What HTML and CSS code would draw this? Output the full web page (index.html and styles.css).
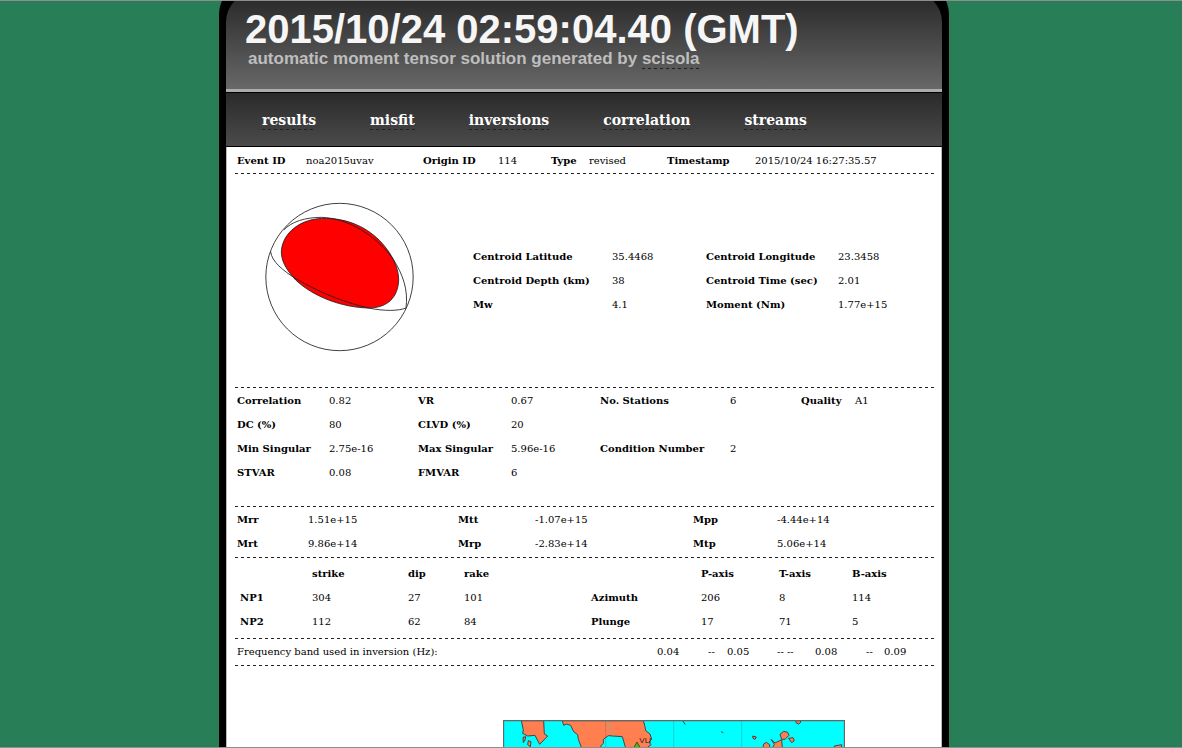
FILE: index.html
```html
<!DOCTYPE html>
<html lang="en">
<head>
<meta charset="utf-8">
<title>2015/10/24 02:59:04.40 (GMT)</title>
<link rel="stylesheet" href="styles.css">
</head>
<body>
<div class="frame">
  <header class="header">
    <h1 class="title">2015/10/24 02:59:04.40 (GMT)</h1>
    <p class="subtitle">automatic moment tensor solution generated by <a href="#scisola">scisola</a></p>
  </header>
  <nav class="nav">
    <a href="#results">results</a>
    <a href="#misfit">misfit</a>
    <a href="#inversions">inversions</a>
    <a href="#correlation">correlation</a>
    <a href="#streams">streams</a>
  </nav>
  <main class="content" id="results">
    <section class="block event">
      <table class="data">
        <colgroup><col class="w69"><col class="w117"><col class="w75"><col class="w53"><col class="w38"><col class="w78"><col class="w88"><col></colgroup>
        <tr><th>Event ID</th><td>noa2015uvav</td><th>Origin ID</th><td>114</td><th>Type</th><td>revised</td><th>Timestamp</th><td>2015/10/24 16:27:35.57</td></tr>
      </table>
    </section>
    <section class="block centroid">
      <svg class="beachball" viewBox="120 66 450 450" fill="none" stroke="#222" stroke-width="2.6" role="img" aria-label="Focal mechanism">
        <path fill="#f00" d="M305 115C380 117 440 150 480 200C508 235 521 270 521 300C519 350 490 384 430 384C350 382 265 350 212 300C180 265 169 240 169 215C172 160 225 113 305 115Z"/>
        <circle cx="343.5" cy="291" r="221"/>
        <path d="M176 150C200 125 240 112 290 112C370 115 450 165 503 235C535 285 550 330 543 385"/>
        <path d="M137 215C140 245 175 272 212 296C280 335 350 365 430 384C480 394 520 393 543 384"/>
      </svg>
      <table class="data">
        <colgroup><col class="w139"><col class="w94"><col class="w132"><col></colgroup>
        <tr><th>Centroid Latitude</th><td>35.4468</td><th>Centroid Longitude</th><td>23.3458</td></tr>
        <tr><th>Centroid Depth (km)</th><td>38</td><th>Centroid Time (sec)</th><td>2.01</td></tr>
        <tr><th>Mw</th><td>4.1</td><th>Moment (Nm)</th><td>1.77e+15</td></tr>
      </table>
    </section>
    <section class="block quality">
      <table class="data">
        <colgroup><col class="w92"><col class="w89"><col class="w93"><col class="w89"><col class="w130"><col class="w71"><col class="w54"><col></colgroup>
        <tr><th>Correlation</th><td>0.82</td><th>VR</th><td>0.67</td><th>No. Stations</th><td>6</td><th>Quality</th><td>A1</td></tr>
        <tr><th>DC (%)</th><td>80</td><th>CLVD (%)</th><td>20</td><td></td><td></td><td></td><td></td></tr>
        <tr><th>Min Singular</th><td>2.75e-16</td><th>Max Singular</th><td>5.96e-16</td><th>Condition Number</th><td>2</td><td></td><td></td></tr>
        <tr><th>STVAR</th><td>0.08</td><th>FMVAR</th><td>6</td><td></td><td></td><td></td><td></td></tr>
      </table>
    </section>
    <section class="block tensor">
      <table class="data">
        <colgroup><col class="w71"><col class="w150"><col class="w77"><col class="w158"><col class="w84"><col></colgroup>
        <tr><th>Mrr</th><td>1.51e+15</td><th>Mtt</th><td>-1.07e+15</td><th>Mpp</th><td>-4.44e+14</td></tr>
        <tr><th>Mrt</th><td>9.86e+14</td><th>Mrp</th><td>-2.83e+14</td><th>Mtp</th><td>5.06e+14</td></tr>
      </table>
    </section>
    <section class="block planes">
      <table class="data">
        <colgroup><col class="w72"><col class="w96"><col class="w56"><col class="w127"><col class="w110"><col class="w78"><col class="w73"><col></colgroup>
        <tr><td></td><th>strike</th><th>dip</th><th>rake</th><td></td><th>P-axis</th><th>T-axis</th><th>B-axis</th></tr>
        <tr><th>NP1</th><td>304</td><td>27</td><td>101</td><th>Azimuth</th><td>206</td><td>8</td><td>114</td></tr>
        <tr><th>NP2</th><td>112</td><td>62</td><td>84</td><th>Plunge</th><td>17</td><td>71</td><td>5</td></tr>
      </table>
    </section>
    <section class="block band">
      <table class="data">
        <colgroup><col class="w420"><col class="w51"><col class="w19"><col class="w50"><col class="w38"><col class="w51"><col class="w18"><col></colgroup>
        <tr><td>Frequency band used in inversion (Hz):</td><td>0.04</td><td>--</td><td>0.05</td><td>-- --</td><td>0.08</td><td>--</td><td>0.09</td></tr>
      </table>
    </section>
    <svg class="map" viewBox="0 0 1026 81" role="img" aria-label="Station map">
      <rect width="1026" height="90" fill="#0ff"/>
      <g fill="#ff7f50" stroke="#444" stroke-width="3" stroke-linejoin="round">
        <path d="M55 2L61 30L59 40L74 48L96 46L110 73L134 48L124 42L122 2Z"/>
        <path d="M60 52L68 50L66 60L61 68Z"/>
        <path d="M76 62L84 65L82 80L74 74Z"/>
        <path d="M178 2L182 16L190 12L203 16L212 35L224 44L226 58L236 84H296L293 78L301 70V58L316 47L358 50L368 84H431L444 74L438 66L446 58L441 42L428 32L426 20L421 2Z"/>
        <path d="M749 48L760 51L756 58L750 55Z"/>
        <path d="M831 43L842 34L854 37L858 46L846 58H836Z"/>
        <path d="M857 55L870 53L874 62L866 68Z"/>
        <path d="M804 58L816 69L836 59L838 84H808L814 73Z"/>
        <path d="M781 84V73L790 67L800 74V84Z"/>
        <path d="M878 2L880 9L887 12L893 7L892 2Z"/>
        <path d="M994 84V78L1016 74V84Z"/>
        <path fill="none" d="M539 2L547 14M654 35L661 38"/>
      </g>
      <path d="M308 3V81M512 3V81M716 3V81" stroke="#3f6868" stroke-opacity=".45" stroke-width="2"/>
      <path d="M313 5L319 26L331 38V47" fill="none" stroke="#9aad8c" stroke-width="3"/>
      <path d="M402 66L412 84H392Z" fill="#3c0" stroke="#222" stroke-width="2"/>
      <text class="station" x="409" y="69">VLI</text>
      <path d="M1.5 81V2H1024.5V81" fill="none" stroke="#666" stroke-width="4"/>
    </svg>
  </main>
</div>
</body>
</html>
```

FILE: styles.css
```css
* { box-sizing: border-box; }
body {
  margin: 0;
  min-height: 100vh;
  padding-right: 14px;
  display: flex;
  justify-content: center;
  overflow: hidden;
  border-top: 1px solid #8e8e8e;
  border-bottom: 1px solid #8e8e8e;
  background: #277e57;
  color: #000;
  font-family: "DejaVu Serif", serif;
  font-size: 10px;
}
.frame {
  width: 100%;
  max-width: 730px;
  margin-top: -17px;
  padding: 8px 7px 0;
  border-radius: 30px 30px 0 0;
  background: #000;
  display: flex;
  flex-direction: column;
}
.header {
  padding: 16px 19px 21px;
  border-radius: 30px 30px 0 0;
  border-bottom: 3px solid #a9aeac;
  background: linear-gradient(#262626, #686868);
  font-family: "Liberation Sans", Arial, sans-serif;
  font-weight: bold;
}
.title {
  margin: 0;
  font-size: 40px;
  line-height: 42px;
  color: #f6f6f6;
}
.subtitle {
  margin: 0 0 0 3px;
  font-size: 17px;
  line-height: 18px;
  color: #bebebe;
}
.header a, .nav a {
  padding-bottom: 1px;
  color: inherit;
  text-decoration: none;
}
.header a, .nav a, .block {
  background: repeating-linear-gradient(90deg, #222 0 3px, transparent 3px 6px) left bottom / 100% 1px no-repeat;
}
.nav {
  display: flex;
  flex-wrap: wrap;
  gap: 0 54px;
  padding: 18px 36px 16px;
  border-top: 1px solid #000;
  border-bottom: 1px solid #000;
  background: linear-gradient(#2a2a2a, #4b4b4b);
  color: #fff;
  font-size: 14px;
  font-weight: bold;
  line-height: 18px;
}
.content {
  flex: 1;
  padding: 0 7px 0 8px;
  border: solid #bbb;
  border-width: 0 1px;
  background-color: #fff;
}
.block { padding: 0 2px 3px; }
.event { padding-top: 1px; padding-bottom: 2px; }
.centroid {
  display: flex;
  align-items: center;
  gap: 58px;
  padding: 0 2px 1px 30px;
}
.beachball {
  flex: none;
  width: 150px;
  height: 150px;
  margin: 28px 0 35px;
}
.quality { padding-bottom: 23px; }
.planes { padding: 3px 2px 6px 5px; }
.data {
  width: 100%;
  table-layout: fixed;
  border-collapse: collapse;
}
.data th, .data td {
  height: 24px;
  padding: 0;
  text-align: left;
  vertical-align: middle;
  white-space: nowrap;
}
.map {
  display: block;
  width: 342px;
  height: 27px;
  margin: 54px 0 0 268px;
}
.station { font: 24px "Liberation Sans", sans-serif; fill: #222; }
.w18 { width: 18px; }
.w19 { width: 19px; }
.w38 { width: 38px; }
.w50 { width: 50px; }
.w51 { width: 51px; }
.w53 { width: 53px; }
.w54 { width: 54px; }
.w56 { width: 56px; }
.w69 { width: 69px; }
.w71 { width: 71px; }
.w72 { width: 72px; }
.w73 { width: 73px; }
.w75 { width: 75px; }
.w77 { width: 77px; }
.w78 { width: 78px; }
.w84 { width: 84px; }
.w88 { width: 88px; }
.w89 { width: 89px; }
.w92 { width: 92px; }
.w93 { width: 93px; }
.w94 { width: 94px; }
.w96 { width: 96px; }
.w110 { width: 110px; }
.w117 { width: 117px; }
.w127 { width: 127px; }
.w130 { width: 130px; }
.w132 { width: 132px; }
.w139 { width: 139px; }
.w150 { width: 150px; }
.w158 { width: 158px; }
.w420 { width: 420px; }
```
